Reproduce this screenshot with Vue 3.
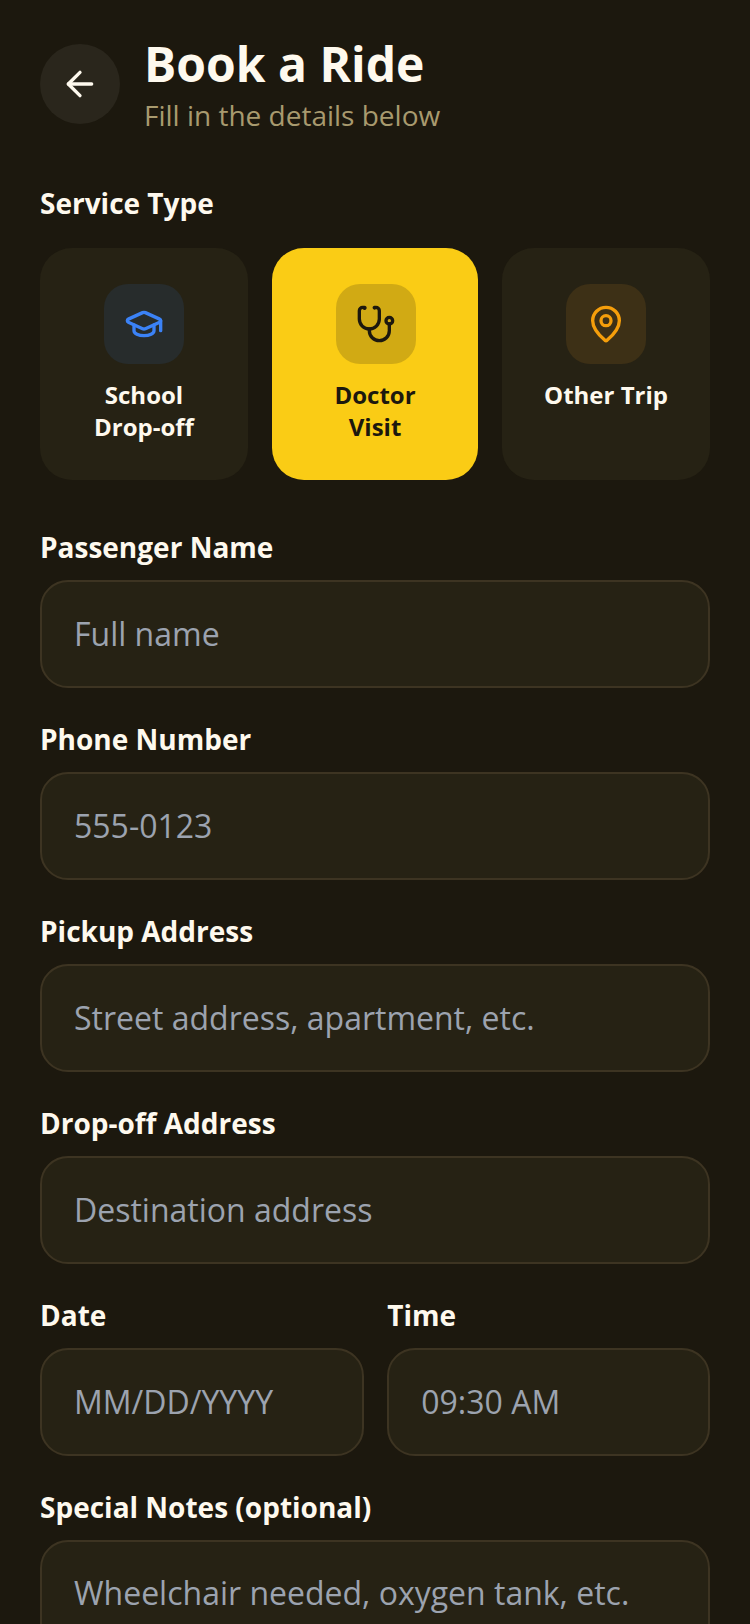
<script setup>
const services = [
  { id: 'school', label: 'School Drop-off', cls: 'blue' },
  { id: 'doctor', label: 'Doctor Visit', cls: 'active' },
  { id: 'other', label: 'Other Trip', cls: 'amber' },
]
const fields = [
  { label: 'Passenger Name', ph: 'Full name' },
  { label: 'Phone Number', ph: '555-0123' },
  { label: 'Pickup Address', ph: 'Street address, apartment, etc.' },
  { label: 'Drop-off Address', ph: 'Destination address' },
]
</script>

<template>
  <main class="page">
    <header class="head">
      <button class="back" type="button" aria-label="Back">
        <svg width="40" height="40" viewBox="0 0 24 24" fill="none" stroke="currentColor" stroke-width="2" stroke-linecap="round" stroke-linejoin="round">
          <path d="m12 19-7-7 7-7" /><path d="M19 12H5" />
        </svg>
      </button>
      <div class="titles">
        <h1>Book a Ride</h1>
        <p>Fill in the details below</p>
      </div>
    </header>

    <section class="block">
      <div class="label service-label">Service Type</div>
      <div class="services">
        <div v-for="s in services" :key="s.id" class="card" :class="s.cls">
          <div class="ico">
            <svg v-if="s.id === 'school'" width="40" height="40" viewBox="0 0 24 24" fill="none" stroke="currentColor" stroke-width="2" stroke-linecap="round" stroke-linejoin="round">
              <path d="M21.42 10.922a1 1 0 0 0-.019-1.838L12.83 5.18a2 2 0 0 0-1.66 0L2.6 9.08a1 1 0 0 0 0 1.832l8.57 3.908a2 2 0 0 0 1.66 0z" />
              <path d="M22 10v6" /><path d="M6 12.5V16a6 3 0 0 0 12 0v-3.5" />
            </svg>
            <svg v-else-if="s.id === 'doctor'" width="40" height="40" viewBox="0 0 24 24" fill="none" stroke="currentColor" stroke-width="2" stroke-linecap="round" stroke-linejoin="round">
              <path d="M4.8 2.3A.3.3 0 1 0 5 2H4a2 2 0 0 0-2 2v5a6 6 0 0 0 6 6 6 6 0 0 0 6-6V4a2 2 0 0 0-2-2h-1a.2.2 0 1 0 .3.3" />
              <path d="M8 15v1a6 6 0 0 0 6 6 6 6 0 0 0 6-6v-4" /><circle cx="20" cy="10" r="2" />
            </svg>
            <svg v-else width="40" height="40" viewBox="0 0 24 24" fill="none" stroke="currentColor" stroke-width="2" stroke-linecap="round" stroke-linejoin="round">
              <path d="M20 10c0 4.993-5.539 10.193-7.399 11.799a1 1 0 0 1-1.202 0C9.539 20.193 4 14.993 4 10a8 8 0 0 1 16 0" />
              <circle cx="12" cy="10" r="3" />
            </svg>
          </div>
          <div class="card-label">{{ s.label }}</div>
        </div>
      </div>
    </section>

    <section v-for="f in fields" :key="f.label" class="field">
      <label class="label">{{ f.label }}</label>
      <input class="input" :placeholder="f.ph" />
    </section>

    <div class="pair">
      <section class="field">
        <label class="label">Date</label>
        <input class="input" placeholder="MM/DD/YYYY" />
      </section>
      <section class="field">
        <label class="label">Time</label>
        <input class="input" placeholder="09:30 AM" />
      </section>
    </div>

    <section class="field">
      <label class="label">Special Notes (optional)</label>
      <textarea class="input area" placeholder="Wheelchair needed, oxygen tank, etc."></textarea>
    </section>
  </main>
</template>

<style>
html, body { margin: 0; background: #1c180e; height: 1624px; overflow: hidden; }
</style>

<style scoped>
.page {
  box-sizing: border-box;
  width: 750px;
  height: 1624px;
  overflow: hidden;
  padding: 44px 40px 0;
  background: #1c180e;
  font-family: "Open Sans", sans-serif;
  color: #fef9ee;
}
.head { display: flex; gap: 24px; align-items: flex-start; }
.back {
  width: 80px; height: 80px; border: 0; border-radius: 50%; padding: 0;
  background: #2a261c; color: #fef9ee;
  display: flex; align-items: center; justify-content: center; flex: none;
}
.titles { margin-top: -8px; }
h1 { margin: 0; font-size: 48px; line-height: 56px; font-weight: 700; color: #fef9ee; }
p { margin: 4px 0 0; font-size: 28px; line-height: 38px; color: #a89a6e; }
.block { margin-top: 51px; margin-bottom: 49px; }
.field { display: flex; flex-direction: column; margin-bottom: 33px; }
.label { display: block; font-size: 28px; line-height: 36px; font-weight: 700; color: #fef9ee; margin-bottom: 15px; }
.service-label { margin-bottom: 27px; }
.services { display: grid; grid-template-columns: 208fr 206fr 208fr; gap: 24px; }
.card {
  height: 232px; box-sizing: border-box; border-radius: 32px; padding: 36px 12px 0;
  background: #262214; display: flex; flex-direction: column; align-items: center;
}
.ico { width: 80px; height: 80px; border-radius: 24px; display: flex; align-items: center; justify-content: center; }
.card-label { margin-top: 15px; font-size: 24px; line-height: 32px; font-weight: 700; text-align: center; max-width: 130px; }
.blue .ico { background: #272c2c; color: #3b82f6; }
.amber .ico { background: #3d3016; color: #f59e0b; }
.active { background: #facc15; color: #1c180e; }
.active .ico { background: #d1aa14; color: #1c180e; margin-left: 2px; }
.input {
  box-sizing: border-box; width: 100%; height: 108px; padding: 0 32px 2px;
  border: 2px solid #3d3422; border-radius: 28px; background: #262214;
  font: 400 32px "Open Sans", sans-serif; color: #fef9ee; outline: none; display: block;
}
.input::placeholder { color: #9ca3af; opacity: 1; }
.area { height: 200px; padding-top: 29px; resize: none; line-height: 44px; }
.pair { display: grid; grid-template-columns: 323.5fr 322.5fr; gap: 23.5px; }
</style>
